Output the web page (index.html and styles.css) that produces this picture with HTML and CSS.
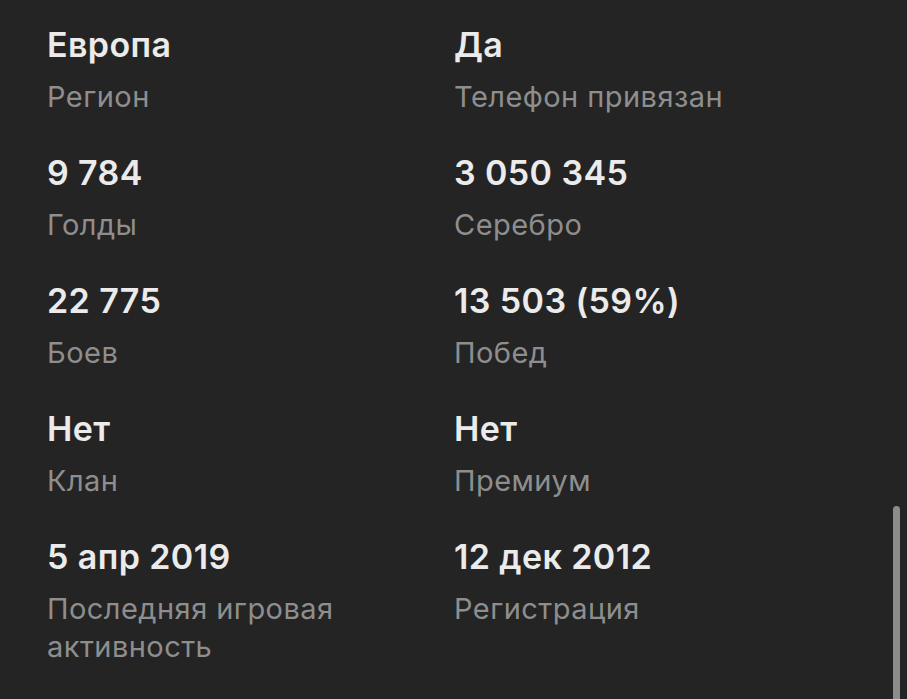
FILE: index.html
```html
<!DOCTYPE html>
<html lang="ru">
<head>
<meta charset="utf-8">
<link rel="stylesheet" href="styles.css">
</head>
<body>
<div class="screen">
  <div class="grid">
    <div class="item"><div class="value">Европа</div><div class="label">Регион</div></div>
    <div class="item"><div class="value">Да</div><div class="label">Телефон привязан</div></div>
    <div class="item"><div class="value">9 784</div><div class="label">Голды</div></div>
    <div class="item"><div class="value">3 050 345</div><div class="label">Серебро</div></div>
    <div class="item"><div class="value">22 775</div><div class="label">Боев</div></div>
    <div class="item"><div class="value">13 503 (59%)</div><div class="label">Побед</div></div>
    <div class="item"><div class="value">Нет</div><div class="label">Клан</div></div>
    <div class="item"><div class="value">Нет</div><div class="label">Премиум</div></div>
    <div class="item"><div class="value">5 апр 2019</div><div class="label">Последняя игровая<br>активность</div></div>
    <div class="item"><div class="value">12 дек 2012</div><div class="label">Регистрация</div></div>
  </div>
  <div class="scrollbar"></div>
</div>
</body>
</html>
```
FILE: styles.css
```css
html, body {
  margin: 0;
  padding: 0;
  background: #242424;
}
.screen {
  position: relative;
  width: 907px;
  height: 699px;
  overflow: hidden;
  background: #242424;
  font-family: Inter, "Noto Sans", sans-serif;
}
.grid {
  display: grid;
  grid-template-columns: 407px 1fr;
  row-gap: 37px;
  padding: 25px 0 0 47px;
}
.value {
  font-size: 34px;
  line-height: 40px;
  font-weight: 600;
  letter-spacing: 0.4px;
  color: #ebebeb;
}
.label {
  margin-top: 13px;
  font-size: 29px;
  line-height: 38px;
  letter-spacing: 0.45px;
  color: #8e8e8e;
}
.scrollbar {
  position: absolute;
  left: 893px;
  top: 506px;
  width: 7px;
  height: 200px;
  border-radius: 4px 4px 0 0;
  background: #8c8c8c;
}
```
